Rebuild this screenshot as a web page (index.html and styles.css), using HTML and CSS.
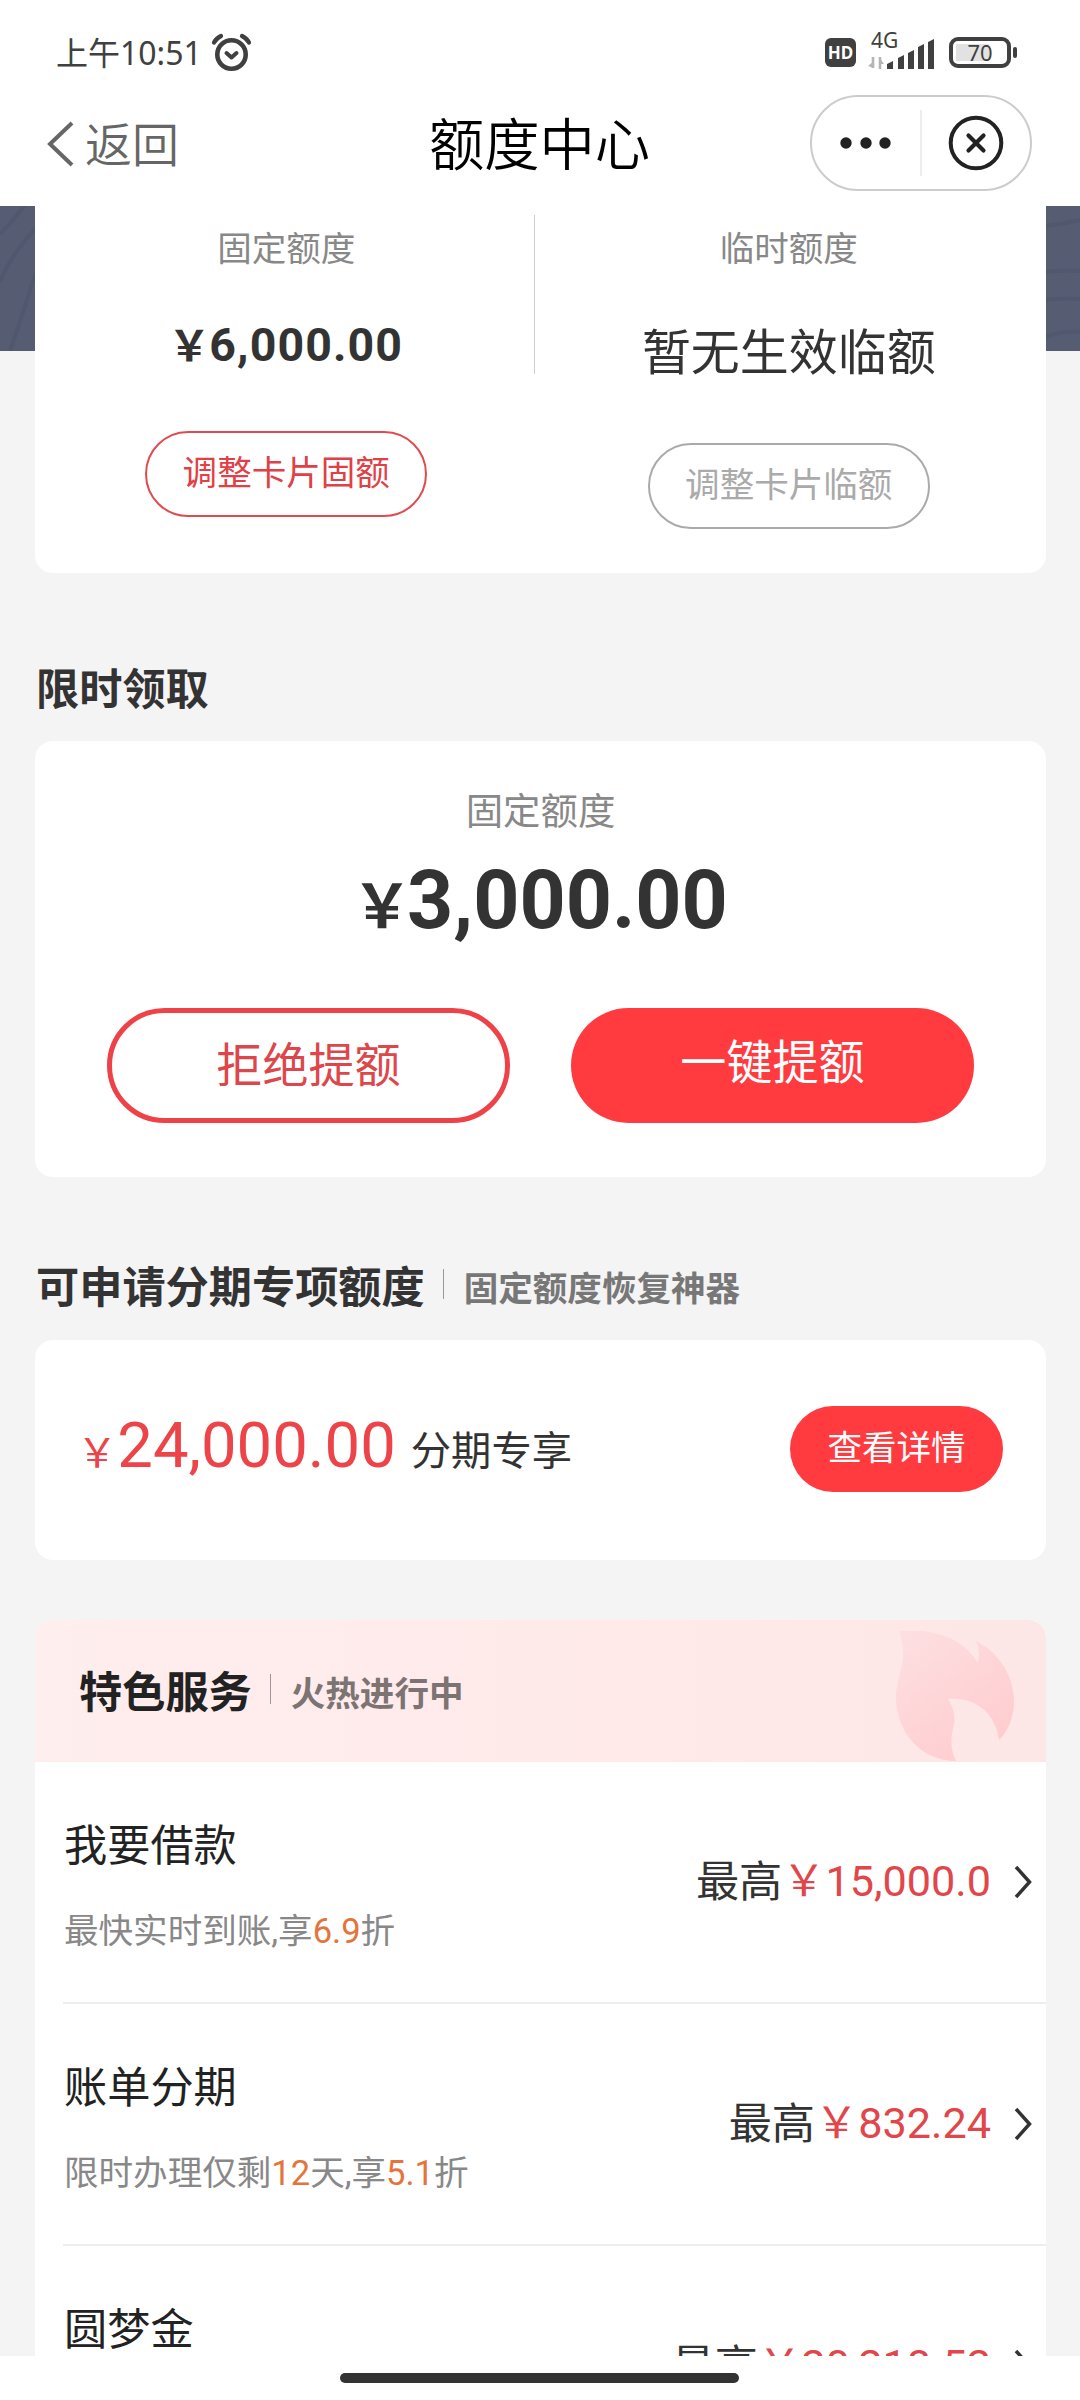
FILE: index.html
```
<!DOCTYPE html>
<html lang="zh-CN">
<head>
<meta charset="utf-8">
<title>额度中心</title>
<link rel="stylesheet" href="styles.css">
</head>
<body>
<div class="screen">
  <header class="top">
    <div class="status">
      <span class="time">上午10:51</span>
      <svg class="alarm" width="42" height="40" viewBox="0 0 42 40" fill="none" stroke="#404040" stroke-linecap="round" stroke-linejoin="round">
        <circle cx="20.500" cy="21.500" r="14.200" stroke-width="4.600"/>
        <path d="M15.500 20l5 4.500l5-4.500" stroke-width="4"/>
        <path d="M3 9.500Q5 5.500 10 3M38 9.500Q36 5.500 31 3" stroke-width="4.200"/>
      </svg>
      <span class="hd">HD</span>
      <svg class="signal" width="68" height="40" viewBox="0 0 68 40">
        <text x="3" y="15" class="net">4G</text>
        <path d="M5 24v11M12 36V24" stroke="#b5b5b5" stroke-width="2.600"/>
        <path d="M6 35v-7l-6 5zM11 24l5 7h-5z" fill="#b5b5b5"/>
        <path d="M19 31l6-3v8h-6zM30 25l6-3v14h-6zM40 20l6-3v19h-6zM50 14l6-3v25h-6zM60 9l6-3v30h-6z" fill="#404040"/>
      </svg>
      <span class="battery"><span class="level">70</span></span>
    </div>
    <nav class="nav">
      <a class="back">
        <svg width="27" height="46" viewBox="0 0 27 46" fill="none" stroke="#666" stroke-width="4"><path d="M25 2L3 23l22 21"/></svg>
        <span>返回</span>
      </a>
      <h1 class="title">额度中心</h1>
      <div class="capsule">
        <svg class="dots" width="52" height="12" viewBox="0 0 52 12" fill="#222"><circle cx="6" cy="6" r="5.700"/><circle cx="26" cy="6" r="5.700"/><circle cx="45" cy="6" r="5.700"/></svg>
        <span class="bar"></span>
        <svg class="close" width="56" height="56" viewBox="0 0 56 56" fill="none" stroke="#222" stroke-linecap="round"><circle cx="28" cy="28" r="25.300" stroke-width="4"/><path d="M20.500 20.500l15 15M35.500 20.500l-15 15" stroke-width="4.200"/></svg>
      </div>
    </nav>
  </header>

  <main class="content">
    <div class="hero">
      <svg class="waves" width="1080" height="145" viewBox="0 0 1080 145" fill="none" stroke="#50586f" stroke-width="4">
        <path d="M0 28Q14 14 26 -2M0 76Q10 50 36 22M10 145Q22 110 36 66M1044 20Q1064 18 1080 14M1044 66q18-2 36-1M1044 94q18-2 36-1M1044 132q18-8 36-6"/>
      </svg>
    </div>
    <section class="card limits">
      <div class="limit">
        <p class="label">固定额度</p>
        <p class="amount"><span class="yen">￥</span>6,000.00</p>
        <button class="pill outline">调整卡片固额</button>
      </div>
      <div class="limit temp">
        <p class="label">临时额度</p>
        <p class="none">暂无生效临额</p>
        <button class="pill muted">调整卡片临额</button>
      </div>
    </section>

    <h2 class="heading first">限时领取</h2>
    <section class="card offer">
      <p class="offer-label">固定额度</p>
      <p class="offer-amount"><span class="yen">￥</span>3,000.00</p>
      <div class="actions">
        <button class="big reject">拒绝提额</button>
        <button class="big accept">一键提额</button>
      </div>
    </section>

    <div class="heading second"><h2>可申请分期专项额度</h2><i></i><span>固定额度恢复神器</span></div>
    <section class="card instalment">
      <p class="inst-amount"><span class="yen">￥</span>24,000.00</p>
      <span class="inst-note">分期专享</span>
      <button class="pill filled">查看详情</button>
    </section>

    <section class="card services">
      <div class="banner">
        <div class="heading"><h2>特色服务</h2><i></i><span>火热进行中</span></div>
        <svg class="flame" width="118" height="130" viewBox="0 0 118 130">
          <defs><linearGradient id="fl" x1="0" y1="0" x2="0.700" y2="1"><stop offset="0" stop-color="#fde0e2"/><stop offset="1" stop-color="#ffcccf"/></linearGradient></defs>
          <path fill="url(#fl)" d="M3 0C36 -3 66 6 82 32C84 24 83 16 80 10C104 22 118 46 118 70C118 87 112 100 103 109C100 86 84 66 52 68C58 77 60 87 57 97C54 110 55 120 60 130C25 130 0 101 0 66C0 45 14 30 3 0Z"/>
        </svg>
      </div>
      <ul class="rows">
        <li>
          <div class="info"><h3>我要借款</h3><p>最快实时到账,享<b>6.9</b>折</p></div>
          <div class="max"><span class="most">最高</span><em><span class="yen">￥</span>15,000.0</em></div>
          <svg class="chev" width="18" height="34" viewBox="0 0 18 34"><path d="M2 2l13.500 15L2 32"/></svg>
        </li>
        <li>
          <div class="info"><h3>账单分期</h3><p>限时办理仅剩<b>12</b>天,享<b>5.1</b>折</p></div>
          <div class="max"><span class="most">最高</span><em><span class="yen">￥</span>832.24</em></div>
          <svg class="chev" width="18" height="34" viewBox="0 0 18 34"><path d="M2 2l13.500 15L2 32"/></svg>
        </li>
        <li>
          <div class="info"><h3>圆梦金</h3></div>
          <div class="max"><span class="most">最高</span><em><span class="yen">￥</span>20,218.52</em></div>
          <svg class="chev" width="18" height="34" viewBox="0 0 18 34"><path d="M2 2l13.500 15L2 32"/></svg>
        </li>
      </ul>
    </section>
  </main>
  <footer class="home"><span></span></footer>
</div>
</body>
</html>
```
FILE: styles.css
```
* { box-sizing: border-box; margin: 0; padding: 0; }
body { font-family: Roboto, "Noto Sans CJK SC", sans-serif; color: #333; background: #f4f4f4; }
button { font: inherit; background: none; border: 0; }
h1, h2, h3, em, i { font-weight: 400; font-style: normal; }
ul { list-style: none; }
svg { display: block; flex: none; }

.screen { width: 1080px; height: 2400px; display: flex; flex-direction: column; overflow: hidden; }
.top { height: 206px; flex: none; background: #fff; }
.status { height: 90px; display: flex; align-items: flex-start; padding: 33px 63px 0 56px; }
.time { font: 400 32px/40px "Noto Sans", "Noto Sans CJK SC", sans-serif; color: #404040; width: 155px; white-space: nowrap; }
.alarm { margin-top: 0; }
.hd { margin: 5px 12px 0 auto; width: 31px; height: 29px; border-radius: 6px; background: #404040; color: #fff; font: 700 17px/30px "Noto Sans", sans-serif; text-align: center; }
.signal { margin-right: 13px; overflow: visible; }
.net { font: 21px "Noto Sans", sans-serif; fill: #404040; }
.battery { position: relative; width: 62px; height: 31px; margin: 4px 6px 0 0; border: 4px solid #404040; border-radius: 9px; padding: 3px; }
.battery::after { content: ""; position: absolute; right: -10px; top: 6px; width: 4px; height: 11px; border-radius: 2px; background: #404040; }
.level { display: block; background: linear-gradient(90deg, #e2e2e2 68%, #fff 68%); height: 17px; font: 22px/17px "Noto Sans", sans-serif; color: #404040; text-align: center; }

.nav { height: 116px; display: grid; grid-template-columns: 1fr 240px 1fr; align-items: start; padding: 5px 48px 0 47px; }
.back { display: flex; align-items: center; height: 96px; padding-top: 2px; gap: 11px; color: #666; font-size: 47px; line-height: 60px; font-weight: 350; }
.back span { padding-top: 3px; }
.title { font-size: 55.300px; line-height: 80px; padding-top: 12px; text-align: center; color: #000; white-space: nowrap; font-weight: 350; }
.capsule { justify-self: end; width: 222px; height: 96px; border: 2px solid #ccc; border-radius: 48px; display: flex; align-items: center; padding: 0 0 0 28px; }
.bar { width: 2px; height: 66px; background: #eee; margin: 0 26px 0 28px; flex: none; }

.content { height: 2150px; flex: none; overflow: hidden; padding: 0 34px 0 35px; position: relative; }
.hero { position: absolute; left: 0; top: 0; width: 1080px; height: 145px; background: #565c72; overflow: hidden; }
.card { background: #fff; border-radius: 18px; position: relative; }
.limits { height: 367px; border-radius: 0 0 18px 18px; display: grid; grid-template-columns: 1fr 1fr; }
.limit { display: flex; flex-direction: column; align-items: center; padding: 18px 3px 0 0; position: relative; }
.limits::before { content: ""; position: absolute; left: 499px; top: 9px; width: 1px; height: 159px; background: #ccc; }
.temp { padding: 18px 9px 0 0; }
.label { font-size: 34.560px; line-height: 50px; color: #888; }
.yen { display: inline-block; font-family: "Noto Sans CJK SC", sans-serif; line-height: 1px; text-align: center; }
.amount { font-size: 46.500px; line-height: 60px; font-weight: 700; letter-spacing: 1.100px; margin-top: 41px; padding-left: 2px; }
.amount .yen { font-size: 42px; width: 38px; text-indent: -3px; letter-spacing: 0; }
.none { font-size: 48.960px; line-height: 64px; margin-top: 48px; }
.pill { height: 86px; border-radius: 43px; font-size: 34.560px; line-height: 50px; padding-bottom: 3px; white-space: nowrap; }
.outline { width: 282px; border: 2px solid #e04b50; color: #e04046; margin-top: 56px; }
.muted { width: 282px; border: 2px solid #aaa; color: #aaa; margin-top: 57px; }

.heading { display: flex; align-items: center; }
.heading h2, h2.heading { font-size: 43.200px; line-height: 60px; font-weight: 700; white-space: nowrap; }
.heading i { width: 1px; height: 30px; background: #999; margin: -10px 20px 0 18px; }
.heading span { font-size: 34.560px; line-height: 60px; color: #777; font-weight: 700; }
h2.heading.first { margin: 88px 0 0 1px; height: 60px; }
.offer { margin-top: 20px; height: 436px; }
.offer-label { padding-top: 43px; font-size: 37.440px; line-height: 56px; text-align: center; color: #888; }
.offer-amount { font-size: 80.640px; line-height: 100px; font-weight: 700; text-align: center; padding: 11px 0 0 3px; }
.offer-amount .yen { font-size: 60px; width: 51px; text-indent: -4px; }
.actions { display: flex; gap: 61px; padding: 57px 72px 0; }
.big { width: 403px; height: 115px; border-radius: 58px; font-size: 46.080px; line-height: 66px; }
.reject { border: 5px solid #ee4248; color: #dd474b; padding-top: 1px; }
.accept { background: #ff3b3f; color: #fff; padding-bottom: 5px; }
.second { margin: 82px 0 0 1px; height: 60px; }
.instalment { margin-top: 21px; height: 220px; display: flex; align-items: flex-start; }
.inst-amount { color: #ec4448; font-size: 63.360px; line-height: 80px; margin: 65px 0 0 42px; }
.inst-amount .yen { font-size: 40.320px; }
.inst-note { font-size: 40.320px; line-height: 60px; margin: 82px 0 0 15px; }
.filled { margin: 66px 43px 0 auto; width: 213px; background: #ff3b3f; color: #fff; }

.services { margin-top: 60px; height: 900px; overflow: hidden; }
.banner { height: 142px; background: linear-gradient(90deg, #ffeeee, #ffe9e9 60%, #fde6e6); display: flex; align-items: flex-start; padding: 11px 32px 0 44px; }
.banner .heading { margin-top: 33px; color: #222; }
.banner .heading span { color: #7c7373; }
.flame { margin-left: auto; }
.rows { padding-left: 28px; }
.rows li { height: 242px; border-bottom: 2px solid #eee; display: flex; align-items: flex-start; }
.info { flex: 1; }
.info h3 { font-size: 43.200px; line-height: 60px; color: #222; margin: 55px 0 0 1px; }
.info p { font-size: 34.560px; line-height: 50px; color: #888; margin: 29px 0 0 1px; }
.info b { color: #e5743a; font-weight: 400; }
.max { font-size: 43.200px; line-height: 60px; margin-top: 90px; white-space: nowrap; display: flex; }
.most { padding-top: 1px; }
.max em { color: #e0464a; }
.chev { margin: 103px 14px 0 23px; fill: none; stroke: #333; stroke-width: 3.500; }

.home { flex: 1; background: #fff; padding-top: 17px; }
.home span { display: block; width: 399px; height: 10px; margin-left: 340px; border-radius: 5px; background: #333; }
```
